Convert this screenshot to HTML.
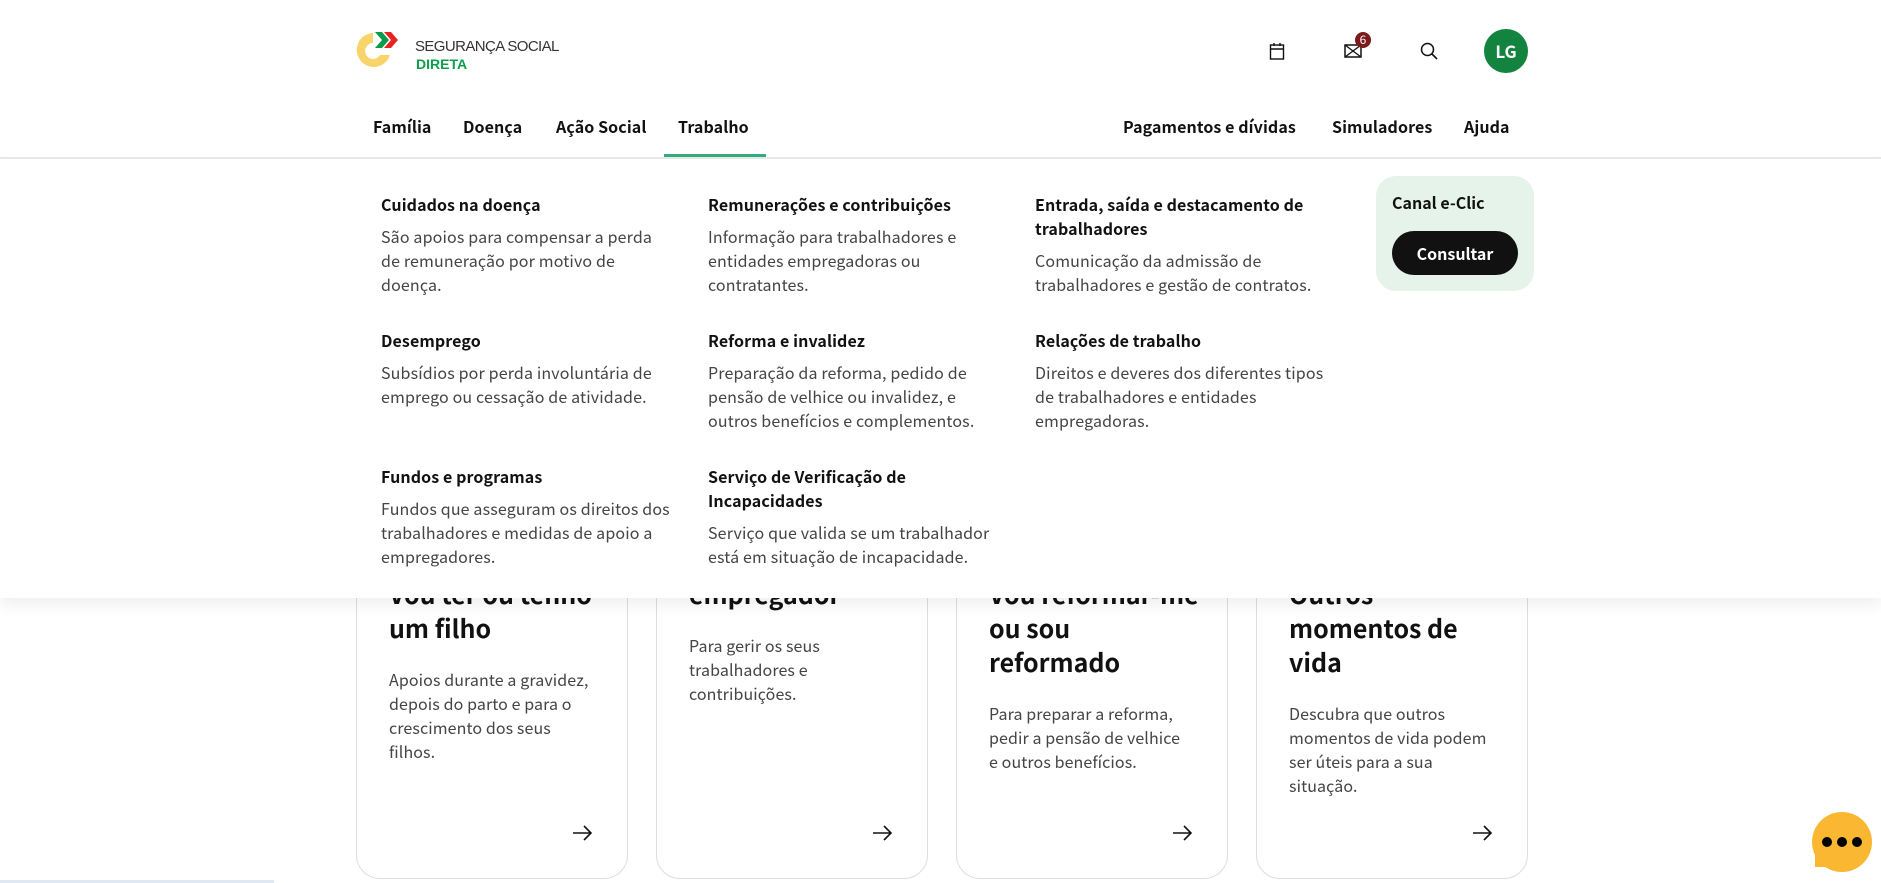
<!DOCTYPE html>
<html><head><meta charset="utf-8"><style>
*{box-sizing:border-box;margin:0;padding:0}
body{width:1881px;height:883px;overflow:hidden;background:#fff;font-family:"Noto Sans CJK SC","Liberation Sans",sans-serif;color:#111;position:relative}
.abs{position:absolute}
.nav{font-weight:700;font-size:16px;top:114px;white-space:nowrap;letter-spacing:.1px}
.card{position:absolute;top:520px;width:272px;height:359px;border:1px solid #ddd;border-radius:24px;background:#fff}
.card h3{position:absolute;left:32px;font-size:25px;line-height:34px;font-weight:700;width:210px}
.card p{position:absolute;left:32px;font-size:16px;line-height:24px;color:#444;width:200px;letter-spacing:.1px}
.card .ar{position:absolute;left:214px;top:302px}
.panel{position:absolute;left:0;top:158px;width:1881px;height:440px;background:#fff;box-shadow:0 8px 14px rgba(0,0,0,.06);border-top:1px solid #e8e8e8}
.it{position:absolute;width:296px}
.it h4{font-size:16px;line-height:24px;font-weight:700;color:#111;letter-spacing:.1px}
.it p{font-size:16px;line-height:24px;color:#444;margin-top:8px;letter-spacing:.15px}
</style></head><body>
<div class="card" style="left:356px"><h3 style="top:56px">Vou ter ou tenho um filho</h3><p style="top:146px">Apoios durante a gravidez, depois do parto e para o crescimento dos seus filhos.</p><svg class="ar" width="22" height="20" viewBox="0 0 22 20"><path d="M2 10H20M13 3L20 10L13 17" fill="none" stroke="#111" stroke-width="1.6"/></svg></div>
<div class="card" style="left:656px"><h3 style="top:22px">Sou o seu empregador</h3><p style="top:112px">Para gerir os seus trabalhadores e contribuições.</p><svg class="ar" width="22" height="20" viewBox="0 0 22 20"><path d="M2 10H20M13 3L20 10L13 17" fill="none" stroke="#111" stroke-width="1.6"/></svg></div>
<div class="card" style="left:956px"><h3 style="top:56px">Vou reformar-me ou sou reformado</h3><p style="top:180px">Para preparar a reforma, pedir a pensão de velhice e outros benefícios.</p><svg class="ar" width="22" height="20" viewBox="0 0 22 20"><path d="M2 10H20M13 3L20 10L13 17" fill="none" stroke="#111" stroke-width="1.6"/></svg></div>
<div class="card" style="left:1256px"><h3 style="top:56px">Outros momentos de vida</h3><p style="top:180px">Descubra que outros momentos de vida podem ser úteis para a sua situação.</p><svg class="ar" width="22" height="20" viewBox="0 0 22 20"><path d="M2 10H20M13 3L20 10L13 17" fill="none" stroke="#111" stroke-width="1.6"/></svg></div>

<svg class="abs" style="left:356px;top:30px" width="46" height="42" viewBox="0 0 46 42">
<path d="M17 3A17 17 0 1 0 34 25L24 25A8 8 0 1 1 17 13Z" fill="#f9d46b"/>
<path d="M19 2L26 2L33 10L26 18L19 18L26 10Z" fill="#0a9a48"/>
<path d="M28 2L35 2L42 10L35 18L28 18L35 10Z" fill="#e52421"/>
</svg>
<div class="abs" style="left:415px;top:38px;font-size:15px;letter-spacing:-.6px;color:#333;font-family:'Liberation Sans',sans-serif;line-height:18px">SEGURANÇA SOCIAL</div>
<div class="abs" style="left:416px;top:56px;font-size:14px;font-weight:700;color:#0aa04a;font-family:'Liberation Sans',sans-serif;line-height:16px">DIRETA</div>

<svg class="abs" style="left:1269px;top:42px" width="16" height="18" viewBox="0 0 16 18"><rect x="1.5" y="3" width="13" height="14" fill="none" stroke="#111" stroke-width="1.4"/><path d="M1.5 7H14.5M5 1V4M11 1V4" stroke="#111" stroke-width="1.4"/></svg>
<svg class="abs" style="left:1344px;top:44px" width="18" height="14" viewBox="0 0 18 14"><rect x="1" y="1" width="16" height="12" fill="none" stroke="#111" stroke-width="1.5"/><path d="M1 1L17 13M17 1L1 13" stroke="#111" stroke-width="1.3"/></svg>
<div class="abs" style="left:1355px;top:32px;width:16px;height:16px;border-radius:50%;background:#7a1a1a;color:#fff;font-size:12px;line-height:16px;text-align:center">6</div>
<svg class="abs" style="left:1420px;top:42px" width="18" height="18" viewBox="0 0 18 18"><circle cx="7.5" cy="7.5" r="6" fill="none" stroke="#111" stroke-width="1.5"/><path d="M12 12L17 17" stroke="#111" stroke-width="1.6"/></svg>
<div class="abs" style="left:1484px;top:29px;width:44px;height:44px;border-radius:50%;background:#13843f;color:#fff;font-weight:700;font-size:17px;line-height:44px;text-align:center">LG</div>

<div class="nav abs" style="left:373px">Família</div>
<div class="nav abs" style="left:463px">Doença</div>
<div class="nav abs" style="left:556px">Ação Social</div>
<div class="nav abs" style="left:678px">Trabalho</div>
<div class="nav abs" style="left:1123px">Pagamentos e dívidas</div>
<div class="nav abs" style="left:1332px">Simuladores</div>
<div class="nav abs" style="left:1464px">Ajuda</div>

<div class="panel">
<div class="it" style="left:381px;top:33px"><h4>Cuidados na doença</h4><p>São apoios para compensar a perda<br>de remuneração por motivo de<br>doença.</p></div>
<div class="it" style="left:708px;top:33px"><h4>Remunerações e contribuições</h4><p>Informação para trabalhadores e entidades empregadoras ou contratantes.</p></div>
<div class="it" style="left:1035px;top:33px"><h4>Entrada, saída e destacamento de trabalhadores</h4><p>Comunicação da admissão de trabalhadores e gestão de contratos.</p></div>
<div class="it" style="left:381px;top:169px"><h4>Desemprego</h4><p>Subsídios por perda involuntária de emprego ou cessação de atividade.</p></div>
<div class="it" style="left:708px;top:169px"><h4>Reforma e invalidez</h4><p>Preparação da reforma, pedido de pensão de velhice ou invalidez, e outros benefícios e complementos.</p></div>
<div class="it" style="left:1035px;top:169px"><h4>Relações de trabalho</h4><p>Direitos e deveres dos diferentes tipos de trabalhadores e entidades empregadoras.</p></div>
<div class="it" style="left:381px;top:305px"><h4>Fundos e programas</h4><p>Fundos que asseguram os direitos dos trabalhadores e medidas de apoio a empregadores.</p></div>
<div class="it" style="left:708px;top:305px"><h4>Serviço de Verificação de Incapacidades</h4><p>Serviço que valida se um trabalhador está em situação de incapacidade.</p></div>
<div class="abs" style="left:1376px;top:17px;width:158px;height:115px;border-radius:20px;background:#e6f3ea">
<div class="abs" style="left:16px;top:14px;font-weight:700;font-size:16px;line-height:24px">Canal e-Clic</div>
<div class="abs" style="left:16px;top:55px;width:126px;height:44px;border-radius:22px;background:#111;color:#fff;font-weight:700;font-size:16px;line-height:44px;text-align:center">Consultar</div>
</div>
</div>
<div class="abs" style="left:664px;top:154px;width:102px;height:4px;background:#34ab7b"></div>
<div class="abs" style="left:0;top:157px;width:1881px;height:1px;background:#e6e6e6"></div>

<div class="abs" style="left:0;top:880px;width:274px;height:3px;background:#dfe8f3"></div>
<svg class="abs" style="left:1810px;top:810px" width="64" height="64" viewBox="0 0 64 64"><circle cx="32" cy="32" r="30" fill="#f9b732"/><path d="M5 40L5 57L20 57Z" fill="#f9b732"/><circle cx="17" cy="32" r="5" fill="#000"/><circle cx="32" cy="32" r="5" fill="#000"/><circle cx="47" cy="32" r="5" fill="#000"/></svg>
</body></html>
